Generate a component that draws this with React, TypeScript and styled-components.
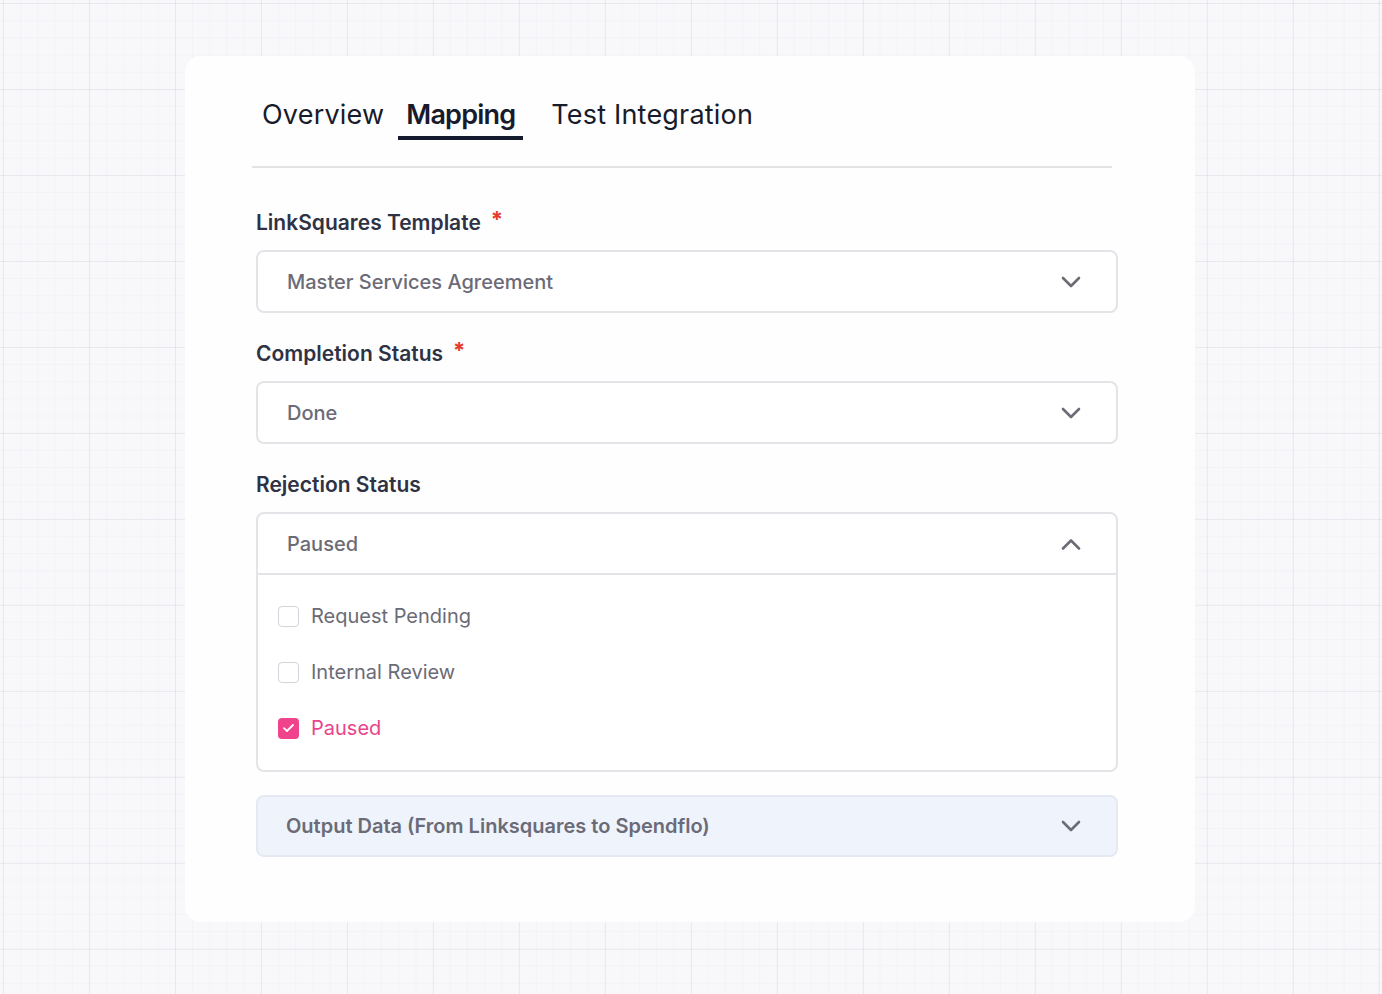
import React from "react";
import styled, { createGlobalStyle } from "styled-components";

const Global = createGlobalStyle`
  html, body { margin: 0; padding: 0; }
  body {
    font-family: Inter, "Noto Sans", sans-serif;
    background-color: #f8f7fa;
    background-image:
      linear-gradient(to right, rgba(60, 50, 90, 0.06) 1px, transparent 1px),
      linear-gradient(to bottom, rgba(60, 50, 90, 0.06) 1px, transparent 1px),
      linear-gradient(to right, rgba(60, 50, 90, 0.025) 1px, transparent 1px),
      linear-gradient(to bottom, rgba(60, 50, 90, 0.025) 1px, transparent 1px);
    background-size: 86px 86px, 86px 86px, 17.2px 17.2px, 17.2px 17.2px;
    background-position: 3px 3px, 3px 3px, 3px 3px, 3px 3px;
    min-height: 994px;
  }
`;

const Page = styled.div`
  padding: 56px 0 0 185px;
  box-sizing: border-box;
  min-height: 994px;
`;

const Card = styled.div`
  width: 1010px;
  height: 866px;
  box-sizing: border-box;
  background: #fefefe;
  border-radius: 16px;
  padding: 43px 83px 0 67px;
`;

const TabBar = styled.div`
  display: flex;
  align-items: flex-end;
  padding-left: 2px;
  border-bottom: 2px solid #e3e3e3;
  padding-bottom: 26px;
`;

const Tab = styled.div<{ $active?: boolean; $offset?: number }>`
  padding: 0 8px 5px;
  margin-left: ${(p) => p.$offset ?? 0}px;
  font-size: 27px;
  line-height: 32px;
  letter-spacing: ${(p) => (p.$active ? "-0.8px" : "0.2px")};
  font-weight: ${(p) => (p.$active ? 600 : 400)};
  color: #171b2b;
  border-bottom: 4px solid ${(p) => (p.$active ? "#141b2d" : "transparent")};
  white-space: nowrap;
`;

const Form = styled.div`
  padding: 42px 0 0 4px;
  width: 862px;
  display: flex;
  flex-direction: column;
`;

const Field = styled.div`
  display: flex;
  flex-direction: column;
  margin-bottom: 28px;
`;

const Label = styled.div`
  font-size: 21px;
  line-height: 26px;
  font-weight: 600;
  color: #2e3244;
  margin-bottom: 14px;
  display: flex;
  align-items: flex-start;
`;

const Star = styled.span`
  color: #e53a2c;
  font-size: 22px;
  font-weight: 700;
  line-height: 16px;
  margin-left: 10px;
  margin-top: 1px;
`;

const SelectBox = styled.div`
  border: 2px solid #e4e4e8;
  border-radius: 8px;
  background: #fff;
  overflow: hidden;
`;

const SelectHead = styled.div<{ $divider?: boolean }>`
  height: 59px;
  display: flex;
  align-items: center;
  justify-content: space-between;
  padding: 0 35px 0 29px;
  border-bottom: ${(p) => (p.$divider ? "2px solid #e4e4e8" : "none")};
`;

const Value = styled.span`
  font-size: 20px;
  font-weight: 500;
  color: #6b6b77;
`;

const OptionList = styled.div`
  padding: 13px 0 14px 20px;
  display: flex;
  flex-direction: column;
`;

const Option = styled.div<{ $checked?: boolean }>`
  height: 56px;
  display: flex;
  align-items: center;
  gap: 12px;
  font-size: 20px;
  color: ${(p) => (p.$checked ? "#e9448b" : "#6b6b77")};
`;

const Box = styled.span<{ $checked?: boolean }>`
  width: 21px;
  height: 21px;
  box-sizing: border-box;
  border-radius: 4px;
  border: ${(p) => (p.$checked ? "none" : "1.5px solid #d3d3db")};
  background: ${(p) => (p.$checked ? "#f0438b" : "#fff")};
  display: flex;
  align-items: center;
  justify-content: center;
`;

const Accordion = styled.div`
  margin-top: -5px;
  height: 62px;
  box-sizing: border-box;
  border: 2px solid #e5e9f3;
  border-radius: 8px;
  background: #eff3fc;
  display: flex;
  align-items: center;
  justify-content: space-between;
  padding: 0 35px 0 28px;
`;

const AccordionTitle = styled.span`
  font-size: 20px;
  font-weight: 600;
  color: #6b6b77;
`;

const Chevron = ({ up }: { up?: boolean }) => (
  <svg width="20" height="12" viewBox="0 0 20 12" fill="none">
    <path
      d={up ? "M2 10.5 L10 2.5 L18 10.5" : "M2 2 L10 10 L18 2"}
      stroke="#6c6c76"
      strokeWidth="2.6"
      strokeLinecap="round"
      strokeLinejoin="round"
    />
  </svg>
);

const Check = () => (
  <svg width="13" height="10" viewBox="0 0 13 10" fill="none">
    <path d="M2 5.2 L5 8 L11 2" stroke="#fff" strokeWidth="1.8" strokeLinecap="round" strokeLinejoin="round" />
  </svg>
);

export default function App() {
  return (
    <>
      <Global />
      <Page>
        <Card>
          <TabBar>
            <Tab>Overview</Tab>
            <Tab $active $offset={6}>Mapping</Tab>
            <Tab $offset={20}>Test Integration</Tab>
          </TabBar>
          <Form>
            <Field>
              <Label>
                LinkSquares Template<Star>*</Star>
              </Label>
              <SelectBox>
                <SelectHead>
                  <Value>Master Services Agreement</Value>
                  <Chevron />
                </SelectHead>
              </SelectBox>
            </Field>
            <Field>
              <Label>
                Completion Status<Star>*</Star>
              </Label>
              <SelectBox>
                <SelectHead>
                  <Value>Done</Value>
                  <Chevron />
                </SelectHead>
              </SelectBox>
            </Field>
            <Field>
              <Label>Rejection Status</Label>
              <SelectBox>
                <SelectHead $divider>
                  <Value>Paused</Value>
                  <Chevron up />
                </SelectHead>
                <OptionList>
                  <Option>
                    <Box />
                    Request Pending
                  </Option>
                  <Option>
                    <Box />
                    Internal Review
                  </Option>
                  <Option $checked>
                    <Box $checked>
                      <Check />
                    </Box>
                    Paused
                  </Option>
                </OptionList>
              </SelectBox>
            </Field>
            <Accordion>
              <AccordionTitle>Output Data (From Linksquares to Spendflo)</AccordionTitle>
              <Chevron />
            </Accordion>
          </Form>
        </Card>
      </Page>
    </>
  );
}
